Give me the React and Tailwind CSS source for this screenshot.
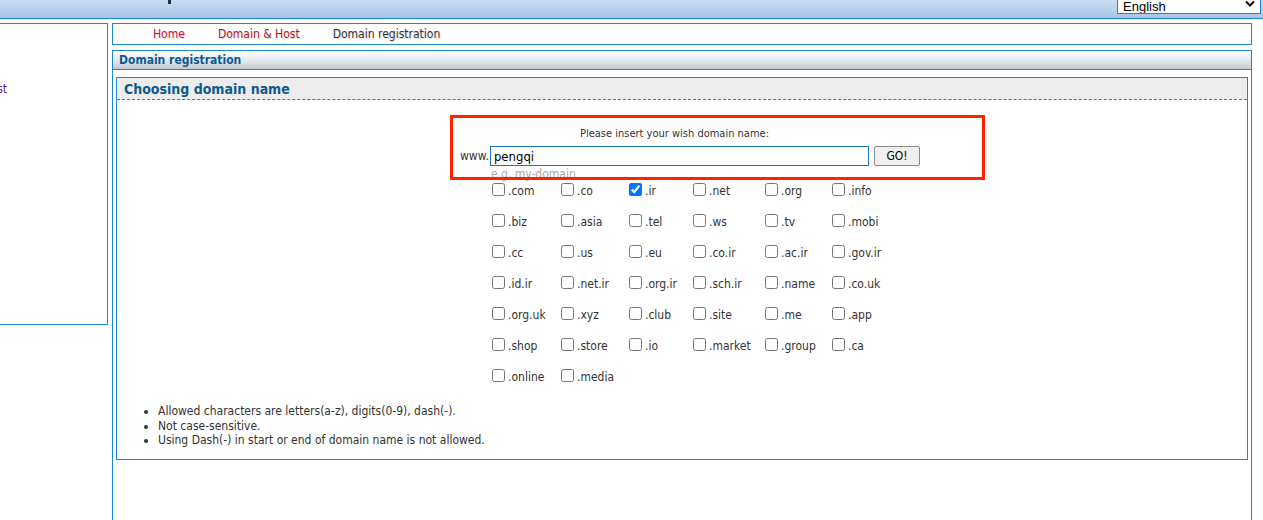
import React from "react";

const tlds = [
  ".com", ".co", ".ir", ".net", ".org", ".info",
  ".biz", ".asia", ".tel", ".ws", ".tv", ".mobi",
  ".cc", ".us", ".eu", ".co.ir", ".ac.ir", ".gov.ir",
  ".id.ir", ".net.ir", ".org.ir", ".sch.ir", ".name", ".co.uk",
  ".org.uk", ".xyz", ".club", ".site", ".me", ".app",
  ".shop", ".store", ".io", ".market", ".group", ".ca",
  ".online", ".media",
];

function Chevron() {
  return (
    <svg width="10" height="7" viewBox="0 0 10 7" className="block">
      <path d="M1 1.5 L5 5.5 L9 1.5" fill="none" stroke="#111" strokeWidth="2" />
    </svg>
  );
}

export default function App() {
  return (
    <div className="relative w-[1263px] h-[520px] overflow-hidden bg-white text-[12px] leading-[15px] text-[#333] font-['DejaVu_Sans_Condensed','DejaVu_Sans',sans-serif]">
      {/* header */}
      <div className="relative h-[19px] border-b border-[#1a88d0] bg-gradient-to-b from-[#c9ddf3] to-[#a8c4e8] flex justify-end">
        <div className="absolute left-[168px] top-0 w-[3px] h-[4px] bg-[#2a2f3a]" />
        <div className="mr-[2px] w-[144px] h-[14px] border-x border-b border-[#1a88d0] bg-white flex items-end justify-between pl-[5px] pr-[5px] overflow-hidden">
          <span className="text-[13px] leading-[13px] text-black font-['Liberation_Sans',sans-serif]">English</span>
          <span className="mb-[6px]"><Chevron /></span>
        </div>
      </div>

      <div className="flex mt-[4px]">
        {/* left panel */}
        <div className="w-[108px] h-[302px] border-y border-r border-[#1a88d0] shrink-0">
          <div className="mt-[58px] w-[7px] flex justify-end whitespace-nowrap text-[#5b1a9a]">
            <span>Domain &amp; Host</span>
          </div>
        </div>

        {/* main */}
        <div className="ml-[4px] w-[1140px] shrink-0 flex flex-col">
          <div className="h-[22px] border border-[#1a88d0] flex items-center pl-[40px] gap-[33px] [text-shadow:1px_1px_1px_rgba(0,0,0,0.15)]">
            <span className="text-[#d0102e]">Home</span>
            <span className="text-[#b8141e]">Domain &amp; Host</span>
            <span className="text-[#333]">Domain registration</span>
          </div>

          <div className="mt-[5px] h-[500px] border-x border-t border-[#1a88d0]">
            <div className="h-[19px] border-b border-[#1a88d0] bg-gradient-to-b from-[#fdfdfe] via-[#e6eaef] to-[#c3cbd6] pl-[6px] flex items-center font-bold text-[#0d5a8e]">
              Domain registration
            </div>

            <div className="mt-[7px] mx-[3px] h-[383px] border border-[#1a88d0] flex flex-col">
              <div className="h-[22px] bg-[#ececec] border-b border-dashed border-[#1a88d0] pl-[7px] flex items-center font-bold text-[14px] text-[#0d5a8e]">
                <span className="mt-[1px]">Choosing domain name</span>
              </div>

              <div className="ml-[343px] w-[460px] flex flex-col">
                <div className="mt-[26px] w-[429px] text-center h-[15px] text-[11px]">Please insert your wish domain name:</div>
                <div className="mt-[5px] h-[20px] flex items-center">
                  <span className="w-[30px]">www.</span>
                  <div className="w-[380px] h-[20px] border border-[#1b72bd] bg-white flex items-center pl-[3px] text-[13px] text-black">
                    pengqi
                  </div>
                  <button className="ml-[5px] w-[46px] h-[20px] bg-[#efefef] border border-[#8a8a8a] rounded-[2px] text-[12px] text-black flex items-center justify-center">
                    GO!
                  </button>
                </div>
                <div className="pl-[31px] h-[14px] leading-[14px] mt-[1px] text-[#a9a9a9]">e.g. my-domain</div>

                <div className="mt-[2px] ml-[32px] grid grid-cols-[69px_68px_64px_72px_67px_80px] gap-y-[18px]">
                  {tlds.map((t) => (
                    <label key={t} className="flex items-center h-[13px] whitespace-nowrap">
                      <input
                        type="checkbox"
                        defaultChecked={t === ".ir"}
                        className="m-0 w-[13px] h-[13px] shrink-0"
                      />
                      <span className="ml-[3px] mt-[3px]">{t}</span>
                    </label>
                  ))}
                </div>
              </div>

              <ul className="mt-[22px] ml-[41px] list-disc leading-[14.5px]">
                <li>Allowed characters are letters(a-z), digits(0-9), dash(-).</li>
                <li>Not case-sensitive.</li>
                <li>Using Dash(-) in start or end of domain name is not allowed.</li>
              </ul>
            </div>
          </div>
        </div>
      </div>

      {/* annotation overlay */}
      <div className="absolute left-[450px] top-[115px] w-[535px] h-[65px] border-[3px] border-[#ff2200] pointer-events-none" />
    </div>
  );
}
